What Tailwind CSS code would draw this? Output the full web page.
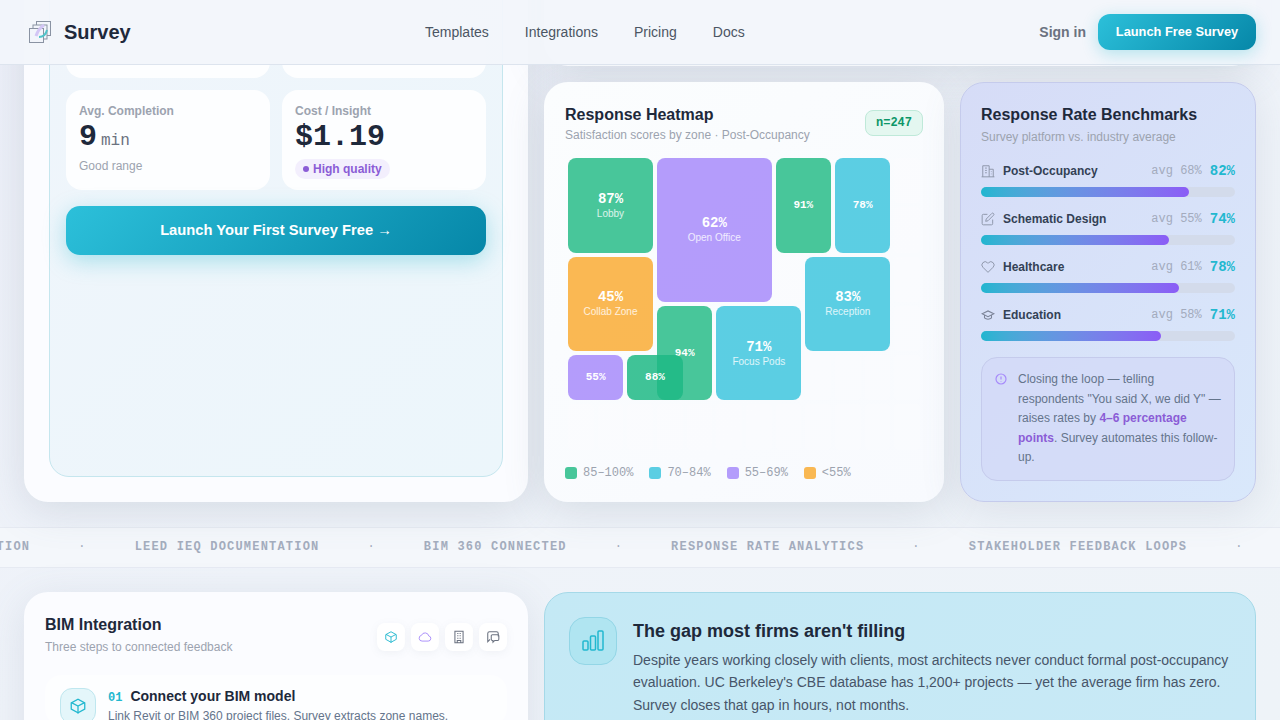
<!DOCTYPE html>
<html lang="en">
<head>
    <meta charset="UTF-8">
    <meta name="viewport" content="width=device-width, initial-scale=1.0">
    <title>Survey</title>
    <script src="https://cdn.jsdelivr.net/npm/@tailwindcss/browser@4"></script>
</head>
<body class="h-[720px] overflow-hidden bg-gradient-to-br from-[#eceff8] via-[#eff3f9] to-[#eef3f8] font-['Liberation_Sans',Arial,sans-serif] text-[#1e293b]">

    <!-- Nav -->
    <nav class="absolute top-0 left-0 z-20 flex h-[65px] w-full items-center justify-between border-b border-[#dde4ee] bg-[#f2f5fb]/95 pl-7 pr-6">
        <div class="flex w-[300px] items-center gap-3">
            <svg class="h-6 w-6" viewBox="0 0 24 24" fill="none" stroke-width="1">
                <rect x="8.5" y="1.5" width="14" height="14" stroke="#8a93a3"/>
                <rect x="5" y="5" width="14" height="14" stroke="#8a93a3" fill="#f2f5fb"/>
                <rect x="1.5" y="8.5" width="14" height="14" stroke="#8a93a3" fill="#f2f5fb"/>
                <path d="M8 16 C10 10 13 7 16 5" stroke="#d3c6f5" stroke-width="3"/>
                <path d="M11 17 C15 17 18 14 19 10" stroke="#4fc3c9" stroke-width="2"/>
            </svg>
            <span class="text-xl font-bold text-[#1e293b]">Survey</span>
        </div>
        <div class="absolute left-[425px] flex gap-9 text-sm text-[#4b5563]">
            <a>Templates</a>
            <a>Integrations</a>
            <a>Pricing</a>
            <a>Docs</a>
        </div>
        <div class="flex items-center gap-3">
            <a class="text-sm font-semibold text-[#6b7280]">Sign in</a>
            <a class="flex h-9 w-[158px] items-center justify-center rounded-xl bg-[linear-gradient(135deg,#2cc0da,#0687a8)] text-[12.8px] font-bold text-white shadow-[0_4px_16px_rgba(34,184,207,0.3)]">Launch Free Survey</a>
        </div>
    </nav>

    <!-- Top section, scrolled partly under the nav -->
    <main class="mt-[-174px] grid grid-cols-[504px_400px_296px] grid-rows-[240px_420px] gap-4 px-6">
        <section class="row-span-2 rounded-3xl bg-[#fbfcff] p-[25px] shadow-[0_8px_40px_rgba(100,116,139,0.18)]">
            <div class="flex h-full flex-col rounded-[20px] border border-[#c5e6ee] bg-[linear-gradient(135deg,#f0f5fb,#ecf6fb)] px-4">
                <div class="mt-auto grid grid-cols-2 gap-3">
                    <div class="h-[60px] rounded-2xl bg-white/90"></div>
                    <div class="h-[60px] rounded-2xl bg-white/90"></div>
                    <div class="h-[100px] rounded-2xl bg-white/90 px-[13px] pt-[13px]">
                        <p class="text-xs font-semibold leading-[16px] text-[#9ca3af]">Avg. Completion</p>
                        <p class="font-['Liberation_Mono',monospace] text-[30px] font-bold leading-[36px] text-[#1e293b]">9<span class="ml-1 text-base font-normal text-[#6b7280]">min</span></p>
                        <p class="mt-[3px] text-xs text-[#9ca3af]">Good range</p>
                    </div>
                    <div class="h-[100px] rounded-2xl bg-white/90 px-[13px] pt-[13px]">
                        <p class="text-xs font-semibold leading-[16px] text-[#9ca3af]">Cost / Insight</p>
                        <p class="font-['Liberation_Mono',monospace] text-[30px] font-bold leading-[36px] text-[#1e293b]">$1.19</p>
                        <span class="mt-[2px] inline-flex h-[20px] items-center gap-1 rounded-full bg-[#f3effd] px-2 text-xs font-bold text-[#8b5cd6]"><i class="h-[6px] w-[6px] rounded-full bg-[#8b5cd6]"></i>High quality</span>
                    </div>
                </div>
                <button class="mt-4 mb-[221px] h-[49px] rounded-[14px] bg-[linear-gradient(135deg,#2cc0da,#0687a8)] text-[14.72px] font-bold text-white shadow-[0_6px_22px_rgba(34,184,207,0.35)]">Launch Your First Survey Free →</button>
            </div>
        </section>

        <section class="col-span-2 rounded-3xl bg-[#f8fafd] shadow-[0_8px_40px_rgba(100,116,139,0.18)]"></section>

        <!-- Heatmap -->
        <section class="flex flex-col rounded-3xl bg-[linear-gradient(135deg,#fbfdfe,#f8fafe)] px-[21px] pt-[22px] shadow-[0_8px_40px_rgba(100,116,139,0.18)]">
            <div class="flex items-start justify-between">
                <div>
                    <h2 class="text-base font-bold leading-[22px] text-[#1e293b]">Response Heatmap</h2>
                    <p class="mt-[1px] text-xs leading-4 text-[#9ca3af]">Satisfaction scores by zone · Post-Occupancy</p>
                </div>
                <span class="mt-[6px] rounded-lg border border-[#bfe9d9] bg-[#e4f7f0] px-[10px] py-1 font-['Liberation_Mono',monospace] text-xs leading-4 font-bold text-[#0d9668]">n=247</span>
            </div>
            <div id="heatmap" class="mt-3 grid h-[297.5px] grid-cols-12 grid-rows-6 gap-1 p-[3px] text-white">
                <div class="col-start-1 col-span-3 row-start-1 row-span-2 flex flex-col items-center justify-center rounded-lg bg-[#34c08f]/90"><b class="font-['Liberation_Mono',monospace] text-sm leading-4">87%</b><span class="text-[10px] leading-[13px] text-white/80">Lobby</span></div>
                <div class="col-start-4 col-span-4 row-start-1 row-span-3 flex flex-col items-center justify-center rounded-lg bg-[#a78bfa]/85"><b class="font-['Liberation_Mono',monospace] text-sm leading-4">62%</b><span class="text-[10px] leading-[13px] text-white/80">Open Office</span></div>
                <div class="col-start-8 col-span-2 row-start-1 row-span-2 flex items-center justify-center rounded-lg bg-[#34c08f]/90"><b class="font-['Liberation_Mono',monospace] text-[11px]">91%</b></div>
                <div class="col-start-10 col-span-2 row-start-1 row-span-2 flex items-center justify-center rounded-lg bg-[#3fc6de]/85"><b class="font-['Liberation_Mono',monospace] text-[11px]">78%</b></div>
                <div class="col-start-1 col-span-3 row-start-3 row-span-2 flex flex-col items-center justify-center rounded-lg bg-[#f9ab35]/85"><b class="font-['Liberation_Mono',monospace] text-sm leading-4">45%</b><span class="text-[10px] leading-[13px] text-white/80">Collab Zone</span></div>
                <div class="col-start-9 col-span-3 row-start-3 row-span-2 flex flex-col items-center justify-center rounded-lg bg-[#3fc6de]/85"><b class="font-['Liberation_Mono',monospace] text-sm leading-4">83%</b><span class="text-[10px] leading-[13px] text-white/80">Reception</span></div>
                <div class="col-start-4 col-span-2 row-start-4 row-span-2 flex items-center justify-center rounded-lg bg-[#34c08f]/90"><b class="font-['Liberation_Mono',monospace] text-[11px]">94%</b></div>
                <div class="col-start-6 col-span-3 row-start-4 row-span-2 flex flex-col items-center justify-center rounded-lg bg-[#3fc6de]/85"><b class="font-['Liberation_Mono',monospace] text-sm leading-4">71%</b><span class="text-[10px] leading-[13px] text-white/80">Focus Pods</span></div>
                <div class="col-start-1 col-span-2 row-start-5 row-span-1 flex items-center justify-center rounded-lg bg-[#a78bfa]/85"><b class="font-['Liberation_Mono',monospace] text-[11px]">55%</b></div>
                <div class="col-start-3 col-span-2 row-start-5 row-span-1 flex items-center justify-center rounded-lg bg-[#1fb885]/85"><b class="font-['Liberation_Mono',monospace] text-[11px]">88%</b></div>
            </div>
            <div class="mt-[12.5px] flex gap-4 font-['Liberation_Mono',monospace] text-xs text-[#9ca3af]">
                <span class="flex items-center gap-[6px]"><i class="h-3 w-3 rounded-[3px] bg-[#34c08f]/90"></i>85–100%</span>
                <span class="flex items-center gap-[6px]"><i class="h-3 w-3 rounded-[3px] bg-[#3fc6de]/85"></i>70–84%</span>
                <span class="flex items-center gap-[6px]"><i class="h-3 w-3 rounded-[3px] bg-[#a78bfa]/85"></i>55–69%</span>
                <span class="flex items-center gap-[6px]"><i class="h-3 w-3 rounded-[3px] bg-[#f9ab35]/85"></i>&lt;55%</span>
            </div>
        </section>

        <!-- Benchmarks -->
        <section class="rounded-3xl border border-[#c5cbec] bg-[linear-gradient(135deg,#d6dcf7,#d9e8fb)] px-5 pt-[21px] shadow-[0_8px_40px_rgba(100,116,139,0.14)]">
            <h2 class="text-base font-bold leading-[22px] text-[#1e293b]">Response Rate Benchmarks</h2>
            <p class="mt-[3px] text-xs leading-4 text-[#9ca3af]">Survey platform vs. industry average</p>
            <div class="mt-[17px] flex flex-col gap-[13px]">
                <div>
                    <div class="flex h-[17px] items-center text-xs font-bold text-[#334155]">
                        <svg class="mr-2 h-[14px] w-[14px]" viewBox="0 0 24 24" fill="none" stroke="#8b93a7" stroke-width="1.6"><path d="M3 22V3h11v19M14 9h7v13M1 22h22M7 7h3M7 11h3M7 15h3M17 13h1M17 17h1"/></svg>
                        Post-Occupancy
                        <span class="ml-auto font-['Liberation_Mono',monospace] font-normal text-[#a3abbd]">avg 68%</span>
                        <span class="ml-2 font-['Liberation_Mono',monospace] text-sm text-[#22b8cf]">82%</span>
                    </div>
                    <div class="mt-2 h-[10px] rounded-full bg-[#d3dbeb]"><div class="h-full w-[82%] rounded-full bg-gradient-to-r from-[#1fb6d0] to-[#8b5cf6]"></div></div>
                </div>
                <div>
                    <div class="flex h-[17px] items-center text-xs font-bold text-[#334155]">
                        <svg class="mr-2 h-[14px] w-[14px]" viewBox="0 0 24 24" fill="none" stroke="#8b93a7" stroke-width="1.6"><path d="M11 4H4a2 2 0 0 0-2 2v14a2 2 0 0 0 2 2h14a2 2 0 0 0 2-2v-7"/><path d="M18.5 2.5a2.1 2.1 0 0 1 3 3L12 15l-4 1 1-4z"/></svg>
                        Schematic Design
                        <span class="ml-auto font-['Liberation_Mono',monospace] font-normal text-[#a3abbd]">avg 55%</span>
                        <span class="ml-2 font-['Liberation_Mono',monospace] text-sm text-[#22b8cf]">74%</span>
                    </div>
                    <div class="mt-2 h-[10px] rounded-full bg-[#d3dbeb]"><div class="h-full w-[74%] rounded-full bg-gradient-to-r from-[#1fb6d0] to-[#8b5cf6]"></div></div>
                </div>
                <div>
                    <div class="flex h-[17px] items-center text-xs font-bold text-[#334155]">
                        <svg class="mr-2 h-[14px] w-[14px]" viewBox="0 0 24 24" fill="none" stroke="#8b93a7" stroke-width="1.6"><path d="M20.8 4.6a5.5 5.5 0 0 0-7.8 0L12 5.7l-1-1.1a5.5 5.5 0 0 0-7.8 7.8L12 21.2l8.8-8.8a5.5 5.5 0 0 0 0-7.8z"/></svg>
                        Healthcare
                        <span class="ml-auto font-['Liberation_Mono',monospace] font-normal text-[#a3abbd]">avg 61%</span>
                        <span class="ml-2 font-['Liberation_Mono',monospace] text-sm text-[#22b8cf]">78%</span>
                    </div>
                    <div class="mt-2 h-[10px] rounded-full bg-[#d3dbeb]"><div class="h-full w-[78%] rounded-full bg-gradient-to-r from-[#1fb6d0] to-[#8b5cf6]"></div></div>
                </div>
                <div>
                    <div class="flex h-[17px] items-center text-xs font-bold text-[#334155]">
                        <svg class="mr-2 h-[14px] w-[14px]" viewBox="0 0 24 24" fill="none" stroke="#7c8498" stroke-width="1.8"><path d="M22 10 12 5 2 10l10 5 10-5z"/><path d="M6 12v5c3 3 9 3 12 0v-5"/></svg>
                        Education
                        <span class="ml-auto font-['Liberation_Mono',monospace] font-normal text-[#a3abbd]">avg 58%</span>
                        <span class="ml-2 font-['Liberation_Mono',monospace] text-sm text-[#22b8cf]">71%</span>
                    </div>
                    <div class="mt-2 h-[10px] rounded-full bg-[#d3dbeb]"><div class="h-full w-[71%] rounded-full bg-gradient-to-r from-[#1fb6d0] to-[#8b5cf6]"></div></div>
                </div>
            </div>
            <div class="mt-4 flex gap-[11px] rounded-2xl border border-[#c5cbec] bg-[#d3daf7]/80 py-3 pl-[13px]">
                <svg class="mt-[3px] h-3 w-3 shrink-0" viewBox="0 0 24 24" fill="none" stroke="#a78bfa" stroke-width="2.4"><circle cx="12" cy="12" r="10"/><path d="M12 7v6M12 16v1"/></svg>
                <p class="w-[204px] text-xs leading-[19.6px] text-[#64748b]">Closing the loop — telling respondents "You said X, we did Y" — raises rates by <b class="text-[#8b5cd6]">4–6 percentage points</b>. Survey automates this follow-up.</p>
            </div>
        </section>
    </main>

    <!-- Ticker -->
    <div class="mt-[25px] flex h-[41px] items-center overflow-hidden whitespace-nowrap border-y border-[#e6eaf2] bg-[#f4f7fb] pb-[2px] font-['Liberation_Mono',monospace] text-xs font-bold tracking-[1.2px] text-[#a3acbd]">
        <div class="ml-[-79px] flex items-center gap-12">
            <span>DOCUMENTATION</span><span class="font-normal">·</span>
            <span>LEED IEQ DOCUMENTATION</span><span class="font-normal">·</span>
            <span>BIM 360 CONNECTED</span><span class="font-normal">·</span>
            <span>RESPONSE RATE ANALYTICS</span><span class="font-normal">·</span>
            <span>STAKEHOLDER FEEDBACK LOOPS</span><span class="font-normal">·</span>
        </div>
    </div>

    <!-- Bottom section -->
    <div class="mt-6 grid grid-cols-[504px_712px] gap-4 px-6">
        <section class="h-[300px] rounded-3xl bg-[#fbfcff] px-[21px] pt-[22px] shadow-[0_8px_40px_rgba(100,116,139,0.14)]">
            <div class="flex items-start justify-between">
                <div>
                    <h2 class="text-base font-bold leading-[22px] text-[#1e293b]">BIM Integration</h2>
                    <p class="mt-[3px] text-xs leading-4 text-[#9ca3af]">Three steps to connected feedback</p>
                </div>
                <div class="mt-[9px] flex gap-[6px]">
                    <span class="flex h-7 w-7 items-center justify-center rounded-lg bg-white shadow-[0_2px_8px_rgba(100,116,139,0.08)]"><svg class="h-[14px] w-[14px]" viewBox="0 0 24 24" fill="none" stroke="#22b8cf" stroke-width="1.6"><path d="M21 16V8l-9-5-9 5v8l9 5 9-5z"/><path d="M3.3 7.5 12 12l8.7-4.5M12 22V12"/></svg></span>
                    <span class="flex h-7 w-7 items-center justify-center rounded-lg bg-white shadow-[0_2px_8px_rgba(100,116,139,0.08)]"><svg class="h-[14px] w-[14px]" viewBox="0 0 24 24" fill="none" stroke="#a78bfa" stroke-width="1.6"><path d="M17.5 19H7a5 5 0 0 1-1-9.9 6.5 6.5 0 0 1 12.4 1A4.5 4.5 0 0 1 17.5 19z"/></svg></span>
                    <span class="flex h-7 w-7 items-center justify-center rounded-lg bg-white shadow-[0_2px_8px_rgba(100,116,139,0.08)]"><svg class="h-[14px] w-[14px]" viewBox="0 0 24 24" fill="none" stroke="#6b7280" stroke-width="1.8"><path d="M5 2h14v20H5zM9 6h2M13 6h2M9 10h2M13 10h2M9 14h2M13 14h2M9 22v-4h6v4"/></svg></span>
                    <span class="flex h-7 w-7 items-center justify-center rounded-lg bg-white shadow-[0_2px_8px_rgba(100,116,139,0.08)]"><svg class="h-[14px] w-[14px]" viewBox="0 0 24 24" fill="none" stroke="#6b7280" stroke-width="1.8"><path d="M7 16 3 20V6a3 3 0 0 1 3-3h12a3 3 0 0 1 3 3v5"/><path d="M9 10a2 2 0 0 1 2-2h9a2 2 0 0 1 2 2v6a2 2 0 0 1-2 2h-5l-3 3v-3h-1a2 2 0 0 1-2-2z"/></svg></span>
                </div>
            </div>
            <div class="mt-5 flex gap-3 rounded-2xl bg-white/50 px-[15px] pt-[13px]">
                <span class="flex h-9 w-9 shrink-0 items-center justify-center rounded-xl border border-[#bfe7ef] bg-[#e4f6fa]"><svg class="h-[18px] w-[18px]" viewBox="0 0 24 24" fill="none" stroke="#22b8cf" stroke-width="1.7"><path d="M21 16V8l-9-5-9 5v8l9 5 9-5z"/><path d="M3.3 7.5 12 12l8.7-4.5M12 22V12"/></svg></span>
                <div class="mt-[-2px]">
                    <p class="flex items-baseline gap-2 text-sm font-bold leading-[20px] text-[#1e293b]"><span class="font-['Liberation_Mono',monospace] text-xs text-[#22b8cf]">01</span>Connect your BIM model</p>
                    <p class="mt-[1px] text-xs leading-[18px] text-[#64748b]">Link Revit or BIM 360 project files. Survey extracts zone names.</p>
                </div>
            </div>
        </section>
        <section class="flex h-[300px] gap-4 rounded-3xl border border-[#a5d9e8] bg-[linear-gradient(135deg,#c4e9f5,#c9e9f6)] px-6 pt-6">
            <span class="flex h-12 w-12 shrink-0 items-center justify-center rounded-2xl border border-[#93d6e6] bg-[#b0e5f1]"><svg class="h-6 w-6" viewBox="0 0 24 24" fill="none" stroke="#22b8cf" stroke-width="1.5"><rect x="2" y="12" width="5" height="9" rx="1"/><rect x="9.5" y="7" width="5" height="14" rx="1"/><rect x="17" y="2" width="5" height="19" rx="1"/></svg></span>
            <div>
                <h2 class="text-lg font-bold leading-[28px] text-[#1e293b]">The gap most firms aren't filling</h2>
                <p class="mt-1 text-sm leading-[22.4px] text-[#475569]">Despite years working closely with clients, most architects never conduct formal post-occupancy evaluation. UC Berkeley's CBE database has 1,200+ projects — yet the average firm has zero. Survey closes that gap in hours, not months.</p>
            </div>
        </section>
    </div>

    <script>
        // empty heatmap cells fill whatever the zones leave free
        const heatmap = document.getElementById('heatmap');
        for (let i = 0; i < 21; i++) {
            const cell = document.createElement('div');
            cell.className = 'rounded-sm bg-white/20';
            heatmap.appendChild(cell);
        }
    </script>
</body>
</html>
